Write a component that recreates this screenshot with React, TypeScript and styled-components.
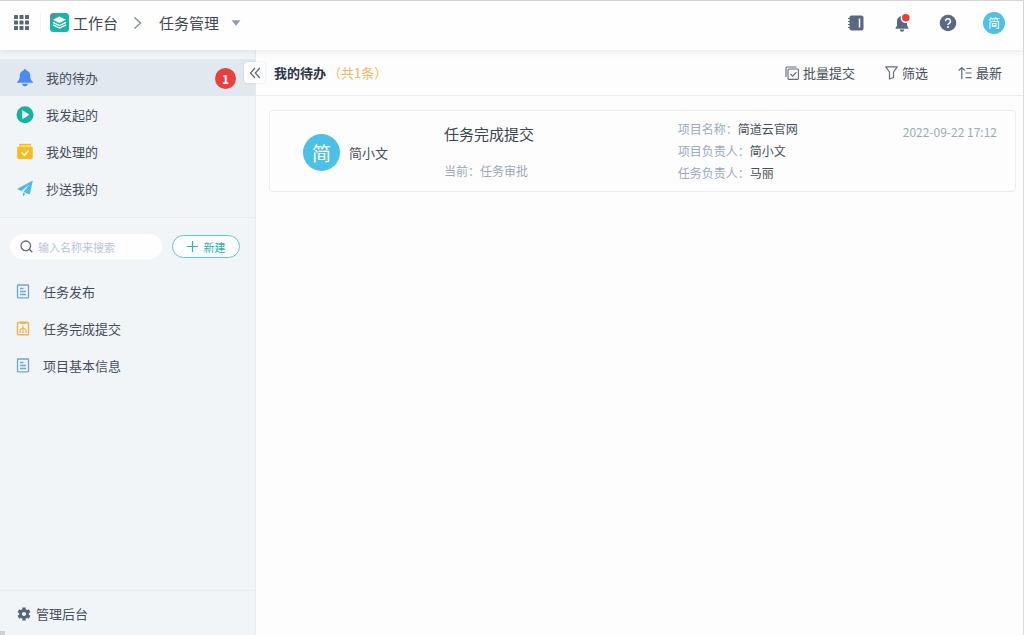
import React from "react";
import styled, { createGlobalStyle } from "styled-components";

const GlobalStyle = createGlobalStyle`
  *, *::before, *::after { box-sizing: border-box; }
  body {
    margin: 0;
    background: #fdfdfd;
    color: #464e5c;
    font: 13px/20px "Noto Sans CJK SC", "Noto Sans", sans-serif;
  }
  button, input { font: inherit; color: inherit; }
  button { padding: 0; border: 0; background: none; cursor: pointer; }
  a { color: inherit; text-decoration: none; }
  h1, h2, ul, dl, dd, p { margin: 0; padding: 0; }
  ul { list-style: none; }
  svg { display: block; flex: none; }
`;

const Page = styled.div`
  display: flex;
  flex-direction: column;
  min-height: 100vh;
  border-top: 1px solid #dcdcdd;
  border-right: 1px solid #dcdcdd;
`;

const Header = styled.header`
  position: relative;
  z-index: 1;
  display: flex;
  align-items: center;
  justify-content: space-between;
  height: 49px;
  padding: 0 18px 6px 14px;
  background: #fefefe;
  box-shadow: 0 1px 7px rgba(40, 50, 70, 0.12);
`;

const Breadcrumb = styled.nav`
  display: flex;
  align-items: center;
  color: #3f4856;
  font-size: 15px;
`;

const AppsButton = styled.button`
  margin-right: 11px;
`;

const HomeLink = styled.a`
  display: flex;
  align-items: center;
  gap: 4px;
  padding-left: 9px;
  border-left: 1px solid #f0f2f4;
`;

const Separator = styled.span`
  margin: 0 17px 0 15px;
`;

const AppSwitch = styled.button`
  display: flex;
  align-items: center;
  gap: 12px;
`;

const HeaderTools = styled.div`
  display: flex;
  align-items: center;
  gap: 24px;
`;

const ToolButton = styled.button`
  display: flex;
  align-items: center;
  justify-content: center;
  width: 22px;
  height: 22px;
`;

const Avatar = styled.span<{ $large?: boolean }>`
  display: flex;
  flex: none;
  align-items: center;
  justify-content: center;
  width: ${(p) => (p.$large ? 37 : 22)}px;
  height: ${(p) => (p.$large ? 37 : 22)}px;
  border-radius: 50%;
  background: #4dc0e8;
  color: #fff;
  font-size: ${(p) => (p.$large ? 19 : 12)}px;
`;

const Body = styled.div`
  display: flex;
  flex: 1;
`;

const Sidebar = styled.aside`
  position: relative;
  display: flex;
  flex-direction: column;
  flex: none;
  width: 256px;
  padding-top: 9px;
  border-right: 1px solid #e7ebef;
  background: #f2f5f8;
`;

const FlowList = styled.ul`
  padding-bottom: 10px;
  border-bottom: 1px solid #e7eaee;
`;

const NavLink = styled.a<{ $active?: boolean; $form?: boolean }>`
  display: flex;
  align-items: center;
  gap: ${(p) => (p.$form ? 13 : 12)}px;
  height: 37px;
  padding: 1px 19px 0 16px;
  background: ${(p) => (p.$active ? "#e1e8f0" : "transparent")};
`;

const Count = styled.span`
  width: 21px;
  margin-left: auto;
  border-radius: 50%;
  background: #e6413d;
  color: #fff;
  font-size: 12px;
  font-weight: 700;
  line-height: 21px;
  text-align: center;
`;

const CollapseButton = styled.button`
  position: absolute;
  top: 12px;
  right: -10px;
  display: flex;
  align-items: center;
  justify-content: center;
  width: 21px;
  height: 21px;
  border-radius: 4px;
  background: #fdfdfd;
  box-shadow: 0 0 2px rgba(60, 80, 110, 0.18);
`;

const FormTools = styled.div`
  display: flex;
  align-items: center;
  gap: 10px;
  padding: 16px 15px 14px 10px;
  font-size: 11px;
`;

const SearchBox = styled.label`
  display: flex;
  flex: 1;
  align-items: center;
  gap: 5px;
  min-width: 0;
  height: 25px;
  padding: 0 10px;
  border-radius: 13px;
  background: #fefefe;
`;

const SearchInput = styled.input`
  flex: 1;
  min-width: 0;
  padding: 0;
  border: 0;
  outline: 0;
  background: none;
  line-height: 20px;
  &::placeholder { color: #b9c6d3; opacity: 1; }
`;

const NewButton = styled.button`
  display: flex;
  align-items: center;
  justify-content: center;
  gap: 6px;
  width: 68px;
  height: 23px;
  border: 1px solid #5accc2;
  border-radius: 12px;
  background: #fefefe;
  color: #27b8aa;
`;

const AdminLink = styled.a`
  display: flex;
  align-items: center;
  gap: 5px;
  height: 45px;
  margin-top: auto;
  padding: 1px 17px 0;
  border-top: 1px solid #e9edf0;
`;

const Main = styled.main`
  flex: 1;
  min-width: 0;
`;

const ListHeader = styled.div`
  display: flex;
  align-items: center;
  justify-content: space-between;
  height: 46px;
  padding: 0 21px 0 18px;
  border-bottom: 1px solid #e8ebee;
`;

const ListTitle = styled.h1`
  color: #2b3547;
  font-size: 13px;
  line-height: 20px;
`;

const Total = styled.span`
  margin-left: 2px;
  color: #f2b862;
  font-weight: 400;
`;

const Actions = styled.div`
  display: flex;
  gap: 30px;
`;

const Action = styled.button`
  display: flex;
  align-items: center;
  gap: 4px;
`;

const TaskCard = styled.article`
  display: grid;
  grid-template-columns: 141fr 234fr 225fr auto;
  height: 82px;
  margin: 14px 7px 0 13px;
  padding: 0 18px 0 33px;
  border: 1px solid #eaecee;
  border-radius: 4px;
`;

const Person = styled.div`
  display: flex;
  align-items: center;
  gap: 9px;
  padding-top: 3px;
`;

const Summary = styled.div`
  display: flex;
  flex-direction: column;
  gap: 16px;
  padding-top: 12px;
`;

const TaskTitle = styled.h2`
  color: #3b4452;
  font-size: 15px;
  font-weight: 400;
  line-height: 22px;
`;

const Muted = styled.p`
  color: #9aa9bd;
  font-size: 12px;
`;

const Details = styled.dl`
  padding-top: 7px;
  font-size: 12px;
  line-height: 22px;
`;

const Detail = styled.div`
  display: flex;
  dt { color: #9aabc2; }
`;

const Time = styled.time`
  padding-top: 11px;
  color: #9aa9bd;
  font-size: 12px;
`;

const StatusCorner = styled.span`
  position: fixed;
  bottom: 0;
  left: 0;
  width: 5px;
  height: 4px;
  background: #cfd0d3;
`;

const GridIcon = () => (
  <svg width="15" height="15" viewBox="0 0 15 15" fill="#596679">
    {[0, 5.5, 11].map((y) => [0, 5.5, 11].map((x) => (
      <rect key={`${x}-${y}`} x={x} y={y} width="4" height="4" rx=".6" />
    )))}
  </svg>
);

const LogoIcon = () => (
  <svg width="19" height="19" viewBox="0 0 19 19">
    <rect width="19" height="19" rx="3.5" fill="#14b8a6" />
    <circle cx="3.5" cy="3" r="2.8" fill="#5f8f93" />
    <path d="M9.5 3.5 16 6.7 9.5 10 3 6.7z" fill="#fff" />
    <path d="m3 9.3 6.5 3.2L16 9.3M3 11.9l6.5 3.2 6.5-3.2" fill="none" stroke="#fff" strokeWidth="1.3" />
  </svg>
);

const ChevronIcon = () => (
  <svg width="9" height="14" viewBox="0 0 9 14" fill="none" stroke="#8591a1" strokeWidth="1.5">
    <path d="m1.5 1.5 6 5.5-6 5.5" />
  </svg>
);

const CaretIcon = () => (
  <svg width="10" height="6" viewBox="0 0 10 6" fill="#909bae"><path d="M.5.3h9L5 5.7z" /></svg>
);

const ContactsIcon = () => (
  <svg width="16" height="16" viewBox="0 0 16 16">
    <rect x="1.5" y=".5" width="14" height="15" rx="2" fill="#5b6980" />
    <path d="M0 3.5h3M0 6.5h3M0 9.5h3M0 12.5h3" stroke="#5b6980" />
    <path d="M11.5 3.5v9" stroke="#fff" strokeWidth="1.5" />
  </svg>
);

const NoticeIcon = () => (
  <svg width="18" height="20" viewBox="0 0 18 20">
    <path d="M9 3a5 5 0 0 0-5 5v4.500L2.500 15v.8h13V15L14 12.500V8a5 5 0 0 0-5-5zM6.800 16.500h4.400a2.200 2.200 0 0 1-4.400 0z" fill="#5b6980" />
    <circle cx="12.800" cy="4.800" r="5.200" fill="#fefefe" />
    <circle cx="12.800" cy="4.800" r="3.800" fill="#ea4035" />
  </svg>
);

const HelpIcon = () => (
  <svg width="18" height="18" viewBox="0 0 18 18">
    <circle cx="9" cy="9" r="8.300" fill="#5b6980" />
    <path d="M6.600 7.200a2.400 2.400 0 1 1 3.500 2.100c-.8.4-1.100.8-1.100 1.700" fill="none" stroke="#fff" strokeWidth="1.500" />
    <circle cx="9" cy="13" r="1" fill="#fff" />
  </svg>
);

const BellIcon = () => (
  <svg width="18" height="18" viewBox="0 0 18 18" fill="#4d88f8">
    <path d="M9 0a1.600 1.600 0 0 0-1.500 1.500C5.200 2.200 3.800 4 3.800 6.500c0 3.200-.8 5-2.800 6.500v.7h16V13c-2-1.500-2.800-3.300-2.800-6.500 0-2.500-1.400-4.300-3.700-5A1.600 1.600 0 0 0 9 0zM6 14.700h6c-.4 1.500-1.500 2.600-3 2.600s-2.600-1.100-3-2.600z" />
  </svg>
);

const PlayIcon = () => (
  <svg width="18" height="18" viewBox="0 0 18 18">
    <circle cx="9" cy="8.700" r="8.500" fill="#12b3a3" />
    <path d="M6.500 4.600v8.200L13 8.700z" fill="#fff" stroke="#fff" strokeWidth=".5" strokeLinejoin="round" />
  </svg>
);

const DoneIcon = () => (
  <svg width="18" height="18" viewBox="0 0 18 18">
    <path d="M3 .8h12v1.800H3z" fill="#fdbb1c" />
    <rect x="1.200" y="3.500" width="15.600" height="12.500" rx="1.500" fill="#fdbb1c" />
    <path d="m5.500 9.200 2.800 2.900 4.500-4.700" fill="none" stroke="#fff" strokeWidth="1.500" />
  </svg>
);

const PlaneIcon = () => (
  <svg width="18" height="18" viewBox="0 0 18 18" fill="#4cbbe8">
    <path d="M16.800.5 1 8.900l4.500 2.100 7.800-6.500-5.800 7.400 6.300 2.600zM7 12.700v3.700l2.500-2.600z" />
  </svg>
);

const DoubleLeftIcon = () => (
  <svg width="12" height="12" viewBox="0 0 12 12" fill="none" stroke="#5c6675" strokeWidth="1.200">
    <path d="M6 1 1.500 6 6 11M10.800 1 6.300 6l4.500 5" />
  </svg>
);

const SearchIcon = () => (
  <svg width="13" height="13" viewBox="0 0 13 13" fill="none" stroke="#5f6b7a" strokeWidth="1.300">
    <circle cx="5.800" cy="5.800" r="4.800" /><path d="m9.300 9.300 3 3" />
  </svg>
);

const PlusIcon = () => (
  <svg width="11" height="11" viewBox="0 0 11 11" stroke="#27b8aa" strokeWidth="1.200"><path d="M5.500 0v11M0 5.500h11" /></svg>
);

const FormIcon = () => (
  <svg width="14" height="16" viewBox="0 0 14 16" fill="none" stroke="#6ca3d8" strokeWidth="1.300">
    <rect x="1.500" y="1" width="11" height="12.800" rx=".5" />
    <path d="M4 4.500h3.500M4 7.500h6M4 10.500h6" />
  </svg>
);

const WorkflowIcon = () => (
  <svg width="14" height="16" viewBox="0 0 14 16" fill="none" stroke="#f4b155" strokeWidth="1.400">
    <rect x="1.500" y="1.500" width="11" height="12.300" rx=".5" />
    <path d="M4 1.700h6" strokeWidth="2.600" />
    <path d="M7 4.500v6M4 10.500V9l3-2.500L10 9v1.500" strokeWidth="1.100" />
    <path d="M3.200 11.200h1.600M6.200 11.200h1.600M9.200 11.200h1.600" />
  </svg>
);

const GearIcon = () => (
  <svg width="14" height="14" viewBox="0 0 14 14">
    <circle cx="7" cy="7" r="3.500" fill="none" stroke="#56657b" strokeWidth="2.800" />
    {[0, 60, 120, 180, 240, 300].map((a) => (
      <path key={a} d="M5.300.5h3.400v2.500H5.300z" fill="#56657b" transform={`rotate(${a} 7 7)`} />
    ))}
  </svg>
);

const BatchIcon = () => (
  <svg width="14" height="14" viewBox="0 0 14 14" fill="none" stroke="#5f6c80" strokeWidth="1.100">
    <path d="M1 11V2q0-1 1-1h9.500" />
    <rect x="3" y="3" width="10.400" height="10.400" rx="1" />
    <path d="m5.500 8 2.200 2.200 3.800-4" />
  </svg>
);

const FilterIcon = () => (
  <svg width="13" height="14" viewBox="0 0 13 14" fill="none" stroke="#5f6c80" strokeWidth="1.200" strokeLinejoin="round">
    <path d="M.8.8h11.400L8.500 6v5.500l-4 1.500V6z" />
  </svg>
);

const SortIcon = () => (
  <svg width="14" height="14" viewBox="0 0 14 14" fill="none" stroke="#5f6c80" strokeWidth="1.200">
    <path d="M3.800 13V1.800M.6 4.700l3.200-3.200L7 4.700M8.500 2.500h5M7.500 7h6M7.500 11.700h6" />
  </svg>
);

const flows = [
  { name: "我的待办", icon: <BellIcon />, count: 1 },
  { name: "我发起的", icon: <PlayIcon /> },
  { name: "我处理的", icon: <DoneIcon /> },
  { name: "抄送我的", icon: <PlaneIcon /> },
];

const forms = [
  { name: "任务发布", icon: <FormIcon /> },
  { name: "任务完成提交", icon: <WorkflowIcon /> },
  { name: "项目基本信息", icon: <FormIcon /> },
];

const actions = [
  { name: "批量提交", icon: <BatchIcon /> },
  { name: "筛选", icon: <FilterIcon /> },
  { name: "最新", icon: <SortIcon /> },
];

const details = [
  ["项目名称", "简道云官网"],
  ["项目负责人", "简小文"],
  ["任务负责人", "马丽"],
];

export default function App() {
  return (
    <Page>
      <GlobalStyle />
      <Header>
        <Breadcrumb>
          <AppsButton aria-label="应用"><GridIcon /></AppsButton>
          <HomeLink href="#home"><LogoIcon />工作台</HomeLink>
          <Separator><ChevronIcon /></Separator>
          <AppSwitch>任务管理<CaretIcon /></AppSwitch>
        </Breadcrumb>
        <HeaderTools>
          <ToolButton aria-label="通讯录"><ContactsIcon /></ToolButton>
          <ToolButton aria-label="通知"><NoticeIcon /></ToolButton>
          <ToolButton aria-label="帮助"><HelpIcon /></ToolButton>
          <ToolButton aria-label="账户"><Avatar>简</Avatar></ToolButton>
        </HeaderTools>
      </Header>
      <Body>
        <Sidebar>
          <FlowList>
            {flows.map((flow) => (
              <li key={flow.name}>
                <NavLink href="#flow" $active={!!flow.count}>
                  {flow.icon}{flow.name}
                  {flow.count && <Count>{flow.count}</Count>}
                </NavLink>
              </li>
            ))}
          </FlowList>
          <CollapseButton aria-label="收起"><DoubleLeftIcon /></CollapseButton>
          <FormTools>
            <SearchBox>
              <SearchIcon />
              <SearchInput type="text" aria-label="搜索" placeholder="输入名称来搜索" />
            </SearchBox>
            <NewButton><PlusIcon />新建</NewButton>
          </FormTools>
          <ul>
            {forms.map((form) => (
              <li key={form.name}>
                <NavLink href="#form" $form>{form.icon}{form.name}</NavLink>
              </li>
            ))}
          </ul>
          <AdminLink href="#admin"><GearIcon />管理后台</AdminLink>
        </Sidebar>
        <Main>
          <ListHeader>
            <ListTitle>我的待办<Total>（共1条）</Total></ListTitle>
            <Actions>
              {actions.map((action) => (
                <Action key={action.name}>{action.icon}{action.name}</Action>
              ))}
            </Actions>
          </ListHeader>
          <TaskCard>
            <Person><Avatar $large>简</Avatar>简小文</Person>
            <Summary>
              <TaskTitle>任务完成提交</TaskTitle>
              <Muted>当前：任务审批</Muted>
            </Summary>
            <Details>
              {details.map(([label, value]) => (
                <Detail key={label}><dt>{label}：</dt><dd>{value}</dd></Detail>
              ))}
            </Details>
            <Time dateTime="2022-09-22T17:12">2022-09-22 17:12</Time>
          </TaskCard>
        </Main>
      </Body>
      <StatusCorner />
    </Page>
  );
}
